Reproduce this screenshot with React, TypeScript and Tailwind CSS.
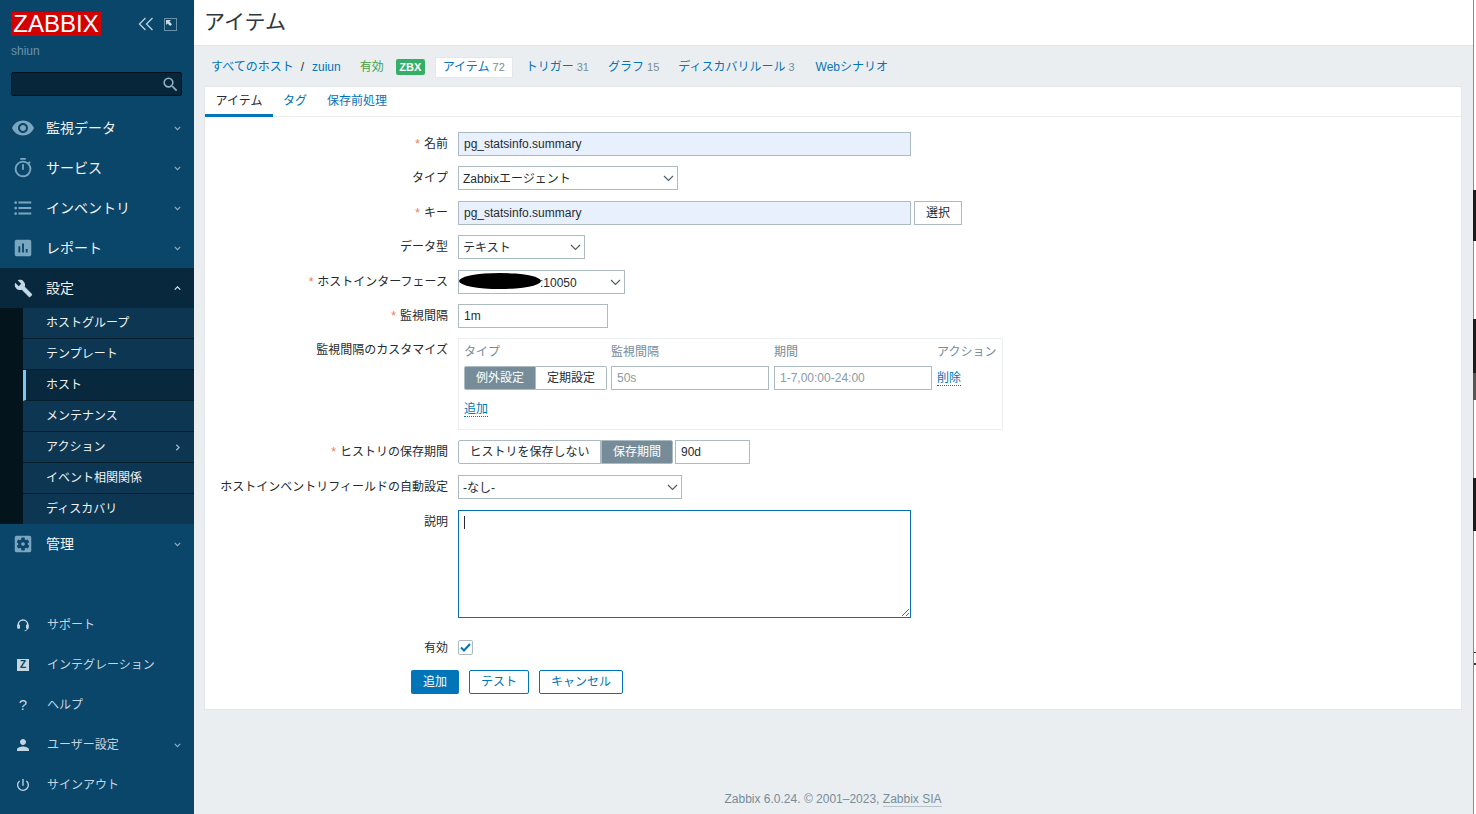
import type { ReactNode } from "react";
import {
  MdAssessment,
  MdBuild,
  MdFormatListBulleted,
  MdOutlineTimer,
  MdPerson,
  MdPowerSettingsNew,
  MdSearch,
  MdSettingsApplications,
  MdVisibility,
} from "react-icons/md";

function Chevron({ dir = "down", className = "" }: { dir?: "down" | "up" | "right"; className?: string }) {
  const d = dir === "down" ? "M1 2.5l3.5 3.5L8 2.5" : dir === "up" ? "M1 6l3.5-3.5L8 6" : "M3 1l3.5 3.5L3 8";
  return (
    <svg width="7" height="7" viewBox="0 0 9 9" fill="none" stroke="currentColor" strokeWidth="1.5" className={className}>
      <path d={d} />
    </svg>
  );
}

function MenuItem({ icon, label, open, active }: { icon: ReactNode; label: string; open?: boolean; active?: boolean }) {
  return (
    <div className={`flex h-10 items-center ${active ? "bg-[#08293d]" : ""}`}>
      <div className="flex w-[46px] justify-center text-[#7ba6c0]">{icon}</div>
      <span className="flex-1 text-[14px] text-[#f2f2f2]">{label}</span>
      {open !== undefined && (
        <Chevron dir={open ? "up" : "down"} className={`mr-[13px] ${active ? "text-[#dce8ef]" : "text-[#8fb0c4]"}`} />
      )}
    </div>
  );
}

const subItems = ["ホストグループ", "テンプレート", "ホスト", "メンテナンス", "アクション", "イベント相関関係", "ディスカバリ"];

function BottomItem({ icon, label, open }: { icon: ReactNode; label: string; open?: boolean }) {
  return (
    <div className="flex h-10 items-center">
      <div className="flex w-[47px] justify-center pr-px text-[#c4d6e1]">{icon}</div>
      <span className="flex-1 text-[12px] text-[#c4d6e1]">{label}</span>
      {open && <Chevron className="mr-[13px] text-[#8fb0c4]" />}
    </div>
  );
}

function Sidebar() {
  return (
    <aside className="flex h-[814px] w-[194px] shrink-0 flex-col justify-between bg-[#0a466a]">
      <div>
        <div className="flex h-[108px] flex-col pl-[11px] pt-[12px]">
          <div className="flex items-center">
            <div className="flex h-6 w-[90px] items-center justify-center bg-[#d40000] text-[24px] leading-none text-white">
              ZABBIX
            </div>
            <svg width="16" height="14" viewBox="0 0 16 14" fill="none" stroke="#b9cfdc" strokeWidth="1.4" className="ml-[37px]">
              <path d="M7.5 1L1.5 7l6 6M14.5 1l-6 6 6 6" />
            </svg>
            <svg width="13" height="13" viewBox="0 0 13 13" fill="none" className="ml-[10px]">
              <rect x="0.5" y="0.5" width="12" height="12" stroke="#c9dbe6" strokeDasharray="1 1" />
              <path d="M2 2h5L5.4 3.6 8 6.2 6.2 8 3.6 5.4 2 7z" fill="#c9dbe6" />
            </svg>
          </div>
          <div className="mt-[7px] text-[12px] leading-[16px] text-[#6c93ab]">shiun</div>
          <div className="relative mt-[13px] h-6 w-[171px] rounded-[2px] border border-[#04131d] bg-[#08263a]">
            <MdSearch size={19} className="absolute right-px top-[2px] text-[#8fb0c4]" />
          </div>
        </div>
        <MenuItem icon={<MdVisibility size={24} />} label="監視データ" open={false} />
        <MenuItem icon={<MdOutlineTimer size={22} />} label="サービス" open={false} />
        <MenuItem icon={<MdFormatListBulleted size={22} />} label="インベントリ" open={false} />
        <MenuItem icon={<MdAssessment size={22} />} label="レポート" open={false} />
        <MenuItem icon={<MdBuild size={19} className="text-[#c2d8e6]" />} label="設定" open active />
        <div className="bg-[#03141d] pl-[23px]">
          {subItems.map((s) => (
            <div
              key={s}
              className={`flex h-[31px] items-center border-b border-[#051e2c] pr-[13px] text-[12px] text-[#f2f2f2] last:h-[30px] last:border-b-0 ${
                s === "ホスト" ? "border-l-[3px] border-l-[#7cc5f2] bg-[#08293d] pl-5" : "bg-[#0c3651] pl-[23px]"
              }`}
            >
              <span className="flex-1">{s}</span>
              {s === "アクション" && <Chevron dir="right" className="text-[#a9c1d0]" />}
            </div>
          ))}
        </div>
        <MenuItem icon={<MdSettingsApplications size={22} />} label="管理" open={false} />
      </div>
      <div className="pb-[9px]">
        <BottomItem
          icon={
            <svg width="12" height="13" viewBox="0 0 12 13" fill="none" stroke="currentColor" strokeWidth="1.5">
              <path d="M1.2 8V5.8a4.8 4.8 0 019.6 0V8" />
              <path d="M10.6 9c0 1.6-1.2 2.6-3 2.8" strokeWidth="1" />
              <rect x="0.2" y="5.6" width="2.8" height="4.2" rx="0.8" fill="currentColor" stroke="none" />
              <rect x="9" y="5.6" width="2.8" height="4.2" rx="0.8" fill="currentColor" stroke="none" />
            </svg>
          }
          label="サポート"
        />
        <BottomItem
          icon={
            <span className="flex h-3 w-3 items-center justify-center bg-[#c4d6e1] text-[10px] font-bold leading-none text-[#0a466a]">Z</span>
          }
          label="インテグレーション"
        />
        <BottomItem icon={<span className="text-[15px]">?</span>} label="ヘルプ" />
        <BottomItem icon={<MdPerson size={18} />} label="ユーザー設定" open />
        <BottomItem icon={<MdPowerSettingsNew size={16} />} label="サインアウト" />
      </div>
    </aside>
  );
}

function NavLink({ label, count, className = "" }: { label: string; count?: number; className?: string }) {
  return (
    <span className={`whitespace-nowrap text-[#0275b8] ${className}`}>
      {label}
      {count !== undefined && <span className="ml-[3px] text-[11px] text-[#768d99]">{count}</span>}
    </span>
  );
}

function Row({ label, req, top, className = "", children }: { label: string; req?: boolean; top?: boolean; className?: string; children: ReactNode }) {
  return (
    <div className={`flex gap-[10px] ${className}`}>
      <div className={`w-[243px] shrink-0 whitespace-nowrap text-right text-[12px] leading-6 ${top ? "" : "self-center"}`}>
        {req && <span className="mr-[4px] text-[#e8804f]">*</span>}
        {label}
      </div>
      {children}
    </div>
  );
}

function TextBox({ value, width, fill }: { value: string; width: string; fill?: boolean }) {
  return (
    <div className={`flex h-6 items-center border border-[#acbbc2] px-[5px] text-[12px] ${width} ${fill ? "bg-[#e8f0fe]" : "bg-white"}`}>
      {value}
    </div>
  );
}

function Select({ value, width, children }: { value?: string; width: string; children?: ReactNode }) {
  return (
    <div className={`relative flex h-6 items-center justify-between border border-[#acbbc2] bg-white pl-[4px] pr-[3px] text-[12px] ${width}`}>
      <span className="pt-[2px]">{value}</span>
      {children}
      <svg width="11" height="7" viewBox="0 0 11 7" fill="none" stroke="#4f5f68" strokeWidth="1.2">
        <path d="M1 1l4.5 4.5L10 1" />
      </svg>
    </div>
  );
}

function Segment({ label, on, width, className = "" }: { label: string; on?: boolean; width: string; className?: string }) {
  return (
    <div
      className={`flex h-6 items-center justify-center border border-[#acbbc2] text-[12px] ${width} ${className} ${
        on ? "border-[#768d99] bg-[#768d99] text-white" : "bg-white"
      }`}
    >
      {label}
    </div>
  );
}

function DottedLink({ label }: { label: string }) {
  return <span className="border-b border-dotted border-[#0275b8] text-[12px] leading-[16px] text-[#0275b8]">{label}</span>;
}

function ItemForm() {
  return (
    <div className="flex flex-col gap-[10px] pb-[15px] pt-[15px] text-[#1f2c33]">
      <Row label="名前" req>
        <TextBox value="pg_statsinfo.summary" width="w-[453px]" fill />
      </Row>
      <Row label="タイプ">
        <Select value="Zabbixエージェント" width="w-[220px]" />
      </Row>
      <Row label="キー" req className="mt-px">
        <TextBox value="pg_statsinfo.summary" width="w-[453px]" fill />
        <div className="-ml-[7px] flex h-6 w-12 items-center justify-center border border-[#acbbc2] bg-white text-[12px]">選択</div>
      </Row>
      <Row label="データ型">
        <Select value="テキスト" width="w-[127px]" />
      </Row>
      <Row label="ホストインターフェース" req className="mt-px">
        <Select width="w-[167px]">
          <span className="absolute left-[81px] top-[3px]">:10050</span>
          <span className="absolute left-0 top-[2px] h-[16px] w-[82px] rounded-[50%] bg-black" />
        </Select>
      </Row>
      <Row label="監視間隔" req>
        <TextBox value="1m" width="w-[150px]" />
      </Row>
      <Row label="監視間隔のカスタマイズ" top>
        <div className="h-[92px] w-[545px] border border-[#ebeef0] px-[5px] pt-[2px] text-[12px]">
          <div className="flex leading-[22px] text-[#768d99]">
            <span className="w-[147px]">タイプ</span>
            <span className="w-[163px]">監視間隔</span>
            <span className="w-[163px]">期間</span>
            <span>アクション</span>
          </div>
          <div className="mt-[3px] flex items-center">
            <Segment label="例外設定" on width="w-[72px]" className="rounded-l-[2px]" />
            <Segment label="定期設定" width="w-[71px]" className="rounded-r-[2px] border-l-0" />
            <div className="ml-[4px] flex h-6 w-[158px] items-center border border-[#acbbc2] px-[5px] text-[#8a9ba4]">50s</div>
            <div className="ml-[5px] flex h-6 w-[158px] items-center border border-[#acbbc2] px-[5px] text-[#8a9ba4]">1-7,00:00-24:00</div>
            <span className="ml-[5px]">
              <DottedLink label="削除" />
            </span>
          </div>
          <div className="mt-[10px]">
            <DottedLink label="追加" />
          </div>
        </div>
      </Row>
      <Row label="ヒストリの保存期間" req>
        <div className="flex items-center">
          <Segment label="ヒストリを保存しない" width="w-[143px]" className="rounded-l-[2px]" />
          <Segment label="保存期間" on width="w-[72px]" className="rounded-r-[2px]" />
          <div className="ml-[2px]">
            <TextBox value="90d" width="w-[75px]" />
          </div>
        </div>
      </Row>
      <Row label="ホストインベントリフィールドの自動設定" className="mt-px">
        <Select value="-なし-" width="w-[224px]" />
      </Row>
      <Row label="説明" top className="mt-px">
        <div className="relative">
          <textarea readOnly className="block h-[108px] w-[453px] border border-[#0a6ea8] bg-white outline-none" />
          <span className="absolute left-[6px] top-[6px] h-[13px] w-px bg-[#1f2c33]" />
        </div>
      </Row>
      <Row label="有効" className="mt-2">
        <div className="flex h-6 items-center">
          <div className="-mt-px flex h-[15px] w-[15px] items-center justify-center rounded-[2px] border border-[#acbbc2] bg-white">
            <svg width="11" height="9" viewBox="0 0 11 9" fill="none" stroke="#0275b8" strokeWidth="2">
              <path d="M1 4.5l3 3 6-6.5" />
            </svg>
          </div>
        </div>
      </Row>
      <div className="flex gap-[10px] pl-[206px] text-[12px]">
        <div className="flex h-6 w-12 items-center justify-center rounded-[2px] bg-[#0275b8] text-white">追加</div>
        <div className="flex h-6 w-[60px] items-center justify-center rounded-[2px] border border-[#0275b8] text-[#0275b8]">テスト</div>
        <div className="flex h-6 w-[84px] items-center justify-center rounded-[2px] border border-[#0275b8] text-[#0275b8]">キャンセル</div>
      </div>
    </div>
  );
}

function Main() {
  return (
    <main className="flex h-[814px] min-w-0 flex-1 flex-col bg-[#ebeef0]">
      <header className="flex h-[46px] shrink-0 items-center border-b border-[#e2e5e7] bg-white pb-[2px] pl-[10px] text-[21px] text-[#2b383f]">
        アイテム
      </header>
      <nav className="flex h-10 shrink-0 items-center pl-[17px] pt-[2px] text-[12px]">
        <NavLink label="すべてのホスト" />
        <span className="ml-[7px] mr-[8px] text-[#1f2c33]">/</span>
        <NavLink label="zuiun" />
        <span className="ml-[19px] text-[#429e47]">有効</span>
        <span className="ml-[12px] flex h-[16px] w-[29px] items-center justify-center rounded-[2px] bg-[#34af67] text-[11px] font-bold leading-none text-white">
          ZBX
        </span>
        <div className="ml-[10px] flex h-[21px] w-[78px] items-center justify-center border border-[#e4e7e9] bg-white">
          <NavLink label="アイテム" count={72} />
        </div>
        <NavLink label="トリガー" count={31} className="ml-[13px]" />
        <NavLink label="グラフ" count={15} className="ml-[19px]" />
        <NavLink label="ディスカバリルール" count={3} className="ml-[19px]" />
        <NavLink label="Webシナリオ" className="ml-[21px]" />
      </nav>
      <section className="ml-[10px] mr-[14px] border border-[#e4e7e9] bg-white">
        <div className="flex h-[30px] border-b border-[#ebeef0] text-[12px]">
          <div className="flex h-[30px] w-[68px] items-center justify-center border-b-[3px] border-[#0275b8] text-[#1f2c33]">アイテム</div>
          <div className="flex items-center px-[10px] pb-[2px] text-[#0275b8]">タグ</div>
          <div className="flex items-center px-[10px] pb-[2px] text-[#0275b8]">保存前処理</div>
        </div>
        <ItemForm />
      </section>
      <footer className="mt-auto pb-[6px] pr-[4px] text-center text-[12px] leading-[18px] text-[#768d99]">
        Zabbix 6.0.24. © 2001–2023, <span className="border-b border-[#b6c4cc]">Zabbix SIA</span>
      </footer>
    </main>
  );
}

// the edge of the window behind the browser, cut off at the right of the shot
function WindowEdge() {
  const blocks = ["top-[190px] h-[51px]", "top-[319px] h-[54px]", "top-[478px] h-[53px]"];
  return (
    <div className="absolute right-0 top-0 h-[814px] w-[3px] border-l border-[#8b8b8b] bg-white">
      {blocks.map((b) => (
        <div key={b} className={`absolute -left-px w-[3px] bg-[#1c1c1c] ${b}`} />
      ))}
      <div className="absolute -left-px top-[373px] h-[27px] w-[3px] bg-[#555555]" />
      <div className="absolute left-0 top-[652px] h-px w-[2px] bg-[#222222]" />
      <div className="absolute left-0 top-[663px] h-[2px] w-[2px] bg-[#333333]" />
    </div>
  );
}

export default function App() {
  return (
    <div className="relative flex h-[814px] w-full overflow-hidden font-['Liberation_Sans','Noto_Sans_CJK_JP',sans-serif]">
      <Sidebar />
      <Main />
      <WindowEdge />
    </div>
  );
}
